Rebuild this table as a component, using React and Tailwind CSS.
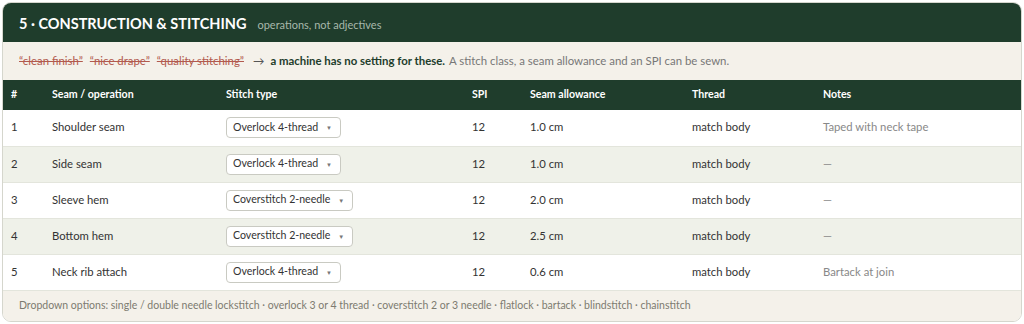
import React from "react";

const rows = [
  { n: 1, seam: "Shoulder seam", stitch: "Overlock 4-thread", spi: "12", sa: "1.0 cm", thread: "match body", notes: "Taped with neck tape" },
  { n: 2, seam: "Side seam", stitch: "Overlock 4-thread", spi: "12", sa: "1.0 cm", thread: "match body", notes: "—" },
  { n: 3, seam: "Sleeve hem", stitch: "Coverstitch 2-needle", spi: "12", sa: "2.0 cm", thread: "match body", notes: "—" },
  { n: 4, seam: "Bottom hem", stitch: "Coverstitch 2-needle", spi: "12", sa: "2.5 cm", thread: "match body", notes: "—" },
  { n: 5, seam: "Neck rib attach", stitch: "Overlock 4-thread", spi: "12", sa: "0.6 cm", thread: "match body", notes: "Bartack at join" },
];

function Select({ value }) {
  return (
    <div className="inline-flex h-[21px] items-center rounded-[4px] border border-[#c9cac2] bg-white pl-[6px] pr-[8px] text-[10.6px] text-[#333]">
      <span>{value}</span>
      <span className="ml-[8px] text-[6px] text-[#777]">▼</span>
    </div>
  );
}

export default function App() {
  return (
    <div className="p-[2px]" style={{ fontFamily: 'Lato, "Noto Sans", sans-serif' }}>
      <div className="h-[320px] w-[1020px] overflow-hidden rounded-[9px] border border-[#d5d6cd] bg-white">
        <div className="flex h-[39px] items-baseline bg-[#1f3d2c] pl-[16px] pt-[10px]">
          <span className="text-[14.5px] font-bold text-white">5 · CONSTRUCTION &amp; STITCHING</span>
          <span className="ml-[11px] text-[11px] text-[#a7b8ab]">operations, not adjectives</span>
        </div>
        <div className="flex h-[38px] items-center bg-[#f4f1ea] pl-[16px] text-[11.4px]">
          <span className="text-[#b25a4e] line-through">“clean finish”</span>
          <span className="ml-[7px] text-[#b25a4e] line-through">“nice drape”</span>
          <span className="ml-[7px] text-[#b25a4e] line-through">“quality stitching”</span>
          <span className="ml-[9px] text-[#555]">→</span>
          <span className="ml-[6px] font-bold text-[#1f3d2c]">a machine has no setting for these.</span>
          <span className="ml-[4px] text-[#777]">A stitch class, a seam allowance and an SPI can be sewn.</span>
        </div>
        <table className="w-full table-fixed border-collapse text-left">
          <colgroup>
            <col className="w-[41px]" />
            <col className="w-[174px]" />
            <col className="w-[246px]" />
            <col className="w-[58px]" />
            <col className="w-[162px]" />
            <col className="w-[131px]" />
            <col />
          </colgroup>
          <thead>
            <tr className="h-[30px] bg-[#1f3d2c] text-[10.6px] font-bold text-white">
              <th className="pl-[8px] font-bold">#</th>
              <th className="pl-[8px] font-bold">Seam / operation</th>
              <th className="pl-[8px] font-bold">Stitch type</th>
              <th className="pl-[8px] font-bold">SPI</th>
              <th className="pl-[8px] font-bold">Seam allowance</th>
              <th className="pl-[8px] font-bold">Thread</th>
              <th className="pl-[8px] font-bold">Notes</th>
            </tr>
          </thead>
          <tbody>
            {rows.map((r, i) => (
              <tr
                key={r.n}
                className={`h-[36px] border-b border-[#e3e5dc] text-[11.3px] text-[#333] ${i % 2 === 1 ? "bg-[#eff1e9]" : "bg-white"}`}
              >
                <td className="pl-[8px]">{r.n}</td>
                <td className="pl-[8px]">{r.seam}</td>
                <td className="pl-[8px]"><Select value={r.stitch} /></td>
                <td className="pl-[8px]">{r.spi}</td>
                <td className="pl-[8px]">{r.sa}</td>
                <td className="pl-[8px]">{r.thread}</td>
                <td className="pl-[8px] text-[#888]">{r.notes}</td>
              </tr>
            ))}
          </tbody>
        </table>
        <div className="flex h-[31px] items-center bg-[#f4f1ea] pl-[16px] text-[10.5px] text-[#7d7b70]">
          Dropdown options: single / double needle lockstitch · overlock 3 or 4 thread · coverstitch 2 or 3 needle · flatlock · bartack · blindstitch · chainstitch
        </div>
      </div>
    </div>
  );
}
